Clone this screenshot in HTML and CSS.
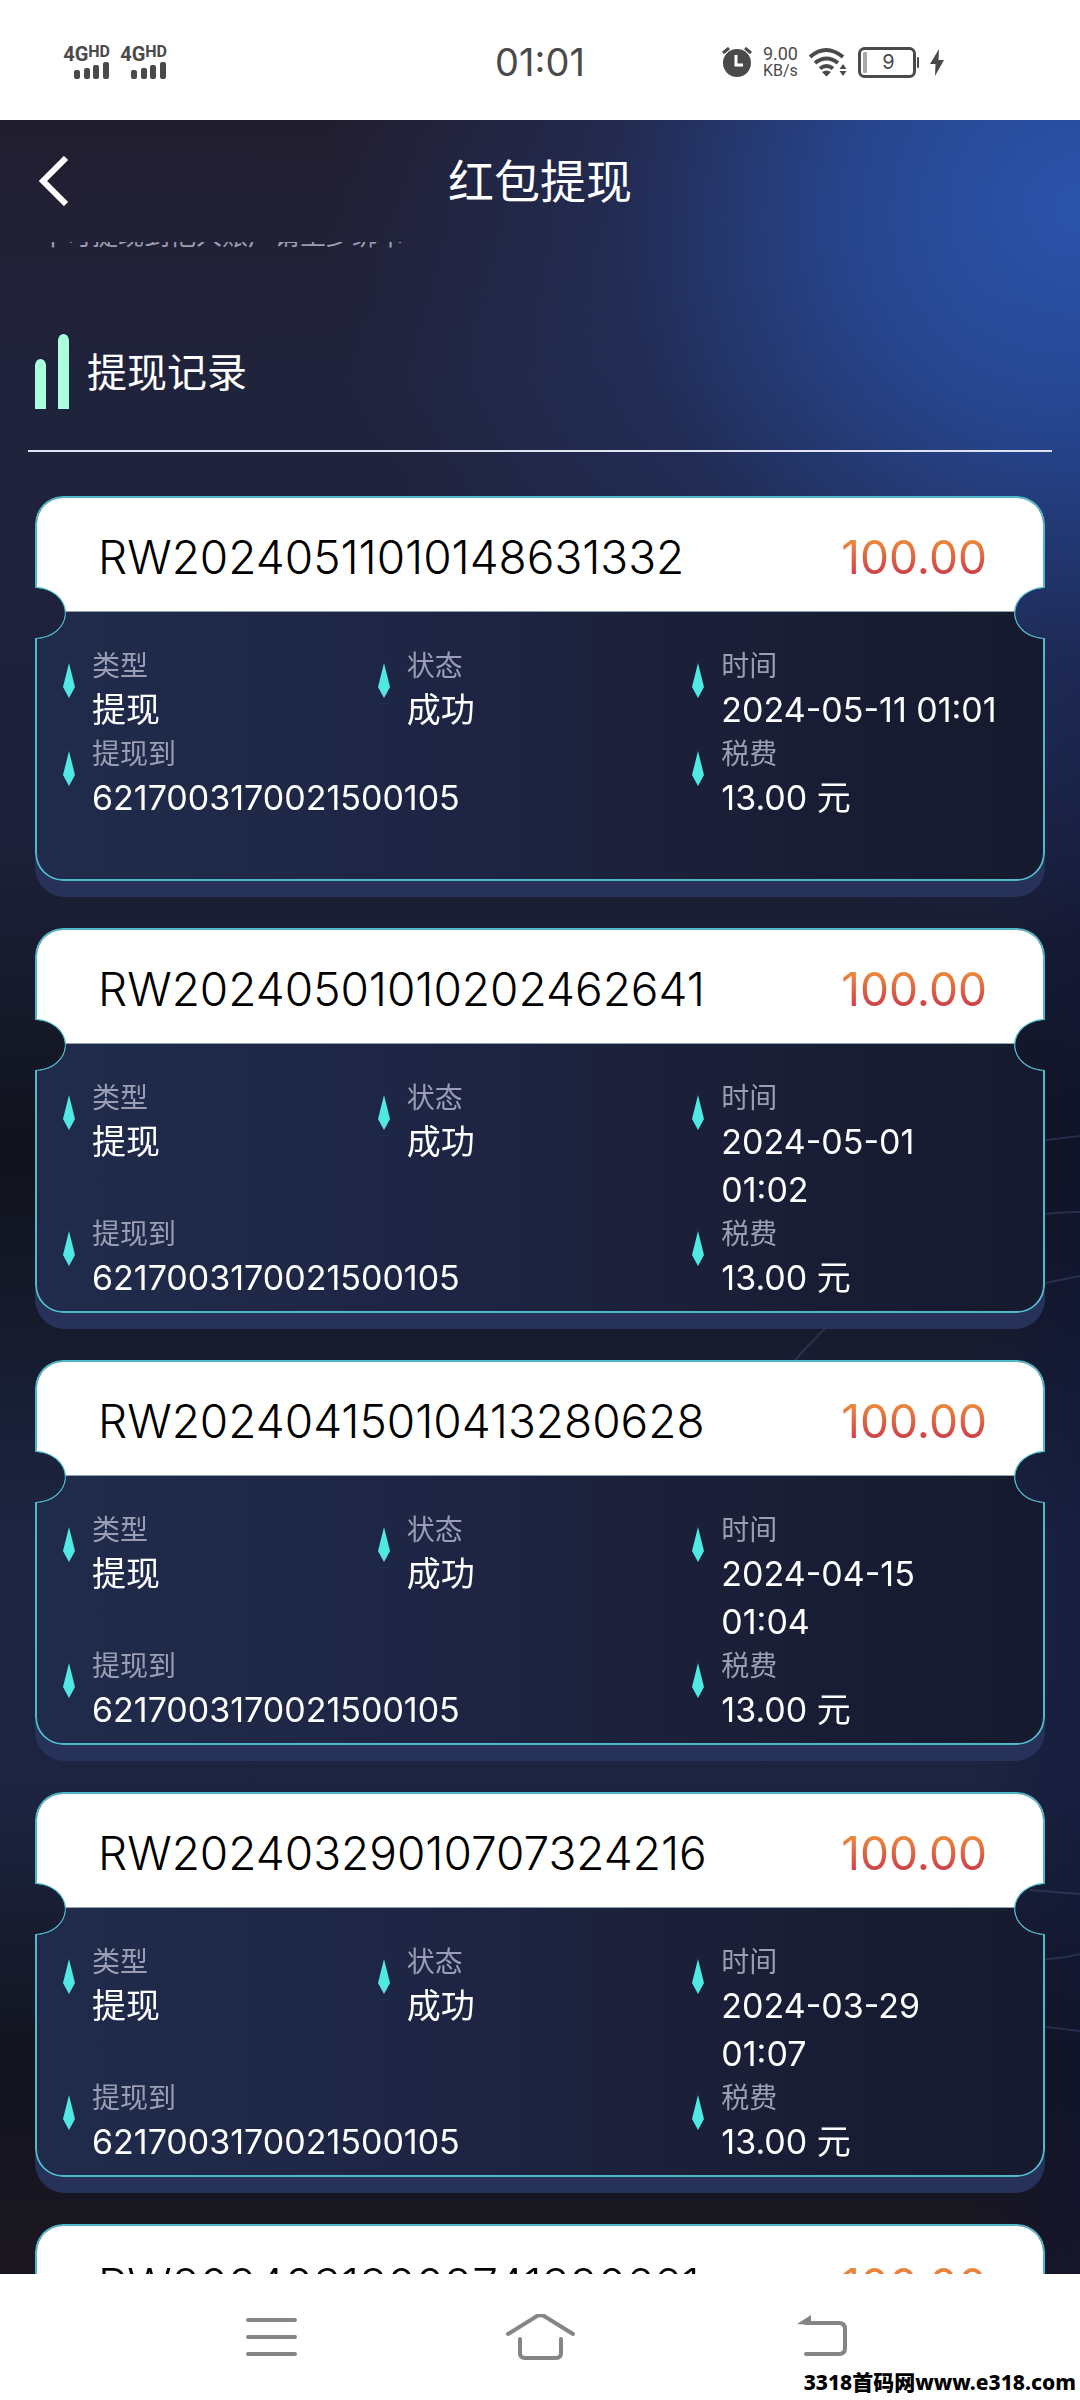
FILE: index.html
```html
<!DOCTYPE html>
<html lang="zh-CN">
<head>
    <meta charset="UTF-8">
    <meta name="viewport" content="width=device-width, initial-scale=1.0">
    <title>红包提现</title>
    <link rel="stylesheet" href="styles.css">
</head>
<body>

    <!-- Status Bar -->
    <div class="status-bar">
        <div class="status-left">
            <div class="signal">
                <span class="signal-label">4G<sup>HD</sup></span>
                <svg class="signal-bars" width="36" height="17" viewBox="0 0 36 17" fill="#4a4a4a"><rect x="0" y="8" width="6" height="9" rx="2"/><rect x="10" y="6" width="6" height="11" rx="2"/><rect x="19" y="3" width="6" height="14" rx="2"/><rect x="29" y="0" width="6" height="17" rx="2"/></svg>
            </div>
            <div class="signal">
                <span class="signal-label">4G<sup>HD</sup></span>
                <svg class="signal-bars" width="36" height="17" viewBox="0 0 36 17" fill="#4a4a4a"><rect x="0" y="8" width="6" height="9" rx="2"/><rect x="10" y="6" width="6" height="11" rx="2"/><rect x="19" y="3" width="6" height="14" rx="2"/><rect x="29" y="0" width="6" height="17" rx="2"/></svg>
            </div>
        </div>
        <div class="status-time">01:01</div>
        <div class="status-right">
            <svg width="30" height="30" viewBox="0 0 30 30"><circle cx="15" cy="16" r="14" fill="#4a4a4a"/><path d="M1 6L7 1M23 1l6 5" stroke="#4a4a4a" stroke-width="3" fill="none"/><path d="M14 8v10h7" stroke="#fff" stroke-width="3" fill="none"/></svg>
            <div class="net-speed"><span>9.00</span><span>KB/s</span></div>
            <svg width="38" height="30" viewBox="0 0 38 30"><g fill="none" stroke="#4a4a4a" stroke-width="4"><path d="M1 10Q17-4 34 10"/><path d="M6 16q11.500-9 23 0"/><path d="M11 21.500q6.500-5 13 0"/></g><path d="M13 25q4.500-3 9 0l-4.500 4.500zM34 17l3.500 5h-7zM34 29l3.500-5h-7z" fill="#4a4a4a"/></svg>
            <div class="battery">
                <svg width="61" height="31" viewBox="0 0 61 31"><rect x="1.500" y="1.500" width="55" height="28" rx="5" fill="none" stroke="#4a4a4a" stroke-width="3"/><rect x="5" y="5" width="4" height="21" rx="1" fill="#aaa"/><rect x="59" y="10" width="2" height="11" rx="1" fill="#4a4a4a"/></svg>
                <span>9</span>
            </div>
            <svg width="14" height="27" viewBox="0 0 14 27"><path d="M9 0L0 15h5.500L5 27l9-16H8.500z" fill="#4a4a4a"/></svg>
        </div>
    </div>

    <main class="app">
        <svg class="backdrop-lines" viewBox="0 0 1080 2154" preserveAspectRatio="none" aria-hidden="true">
            <g fill="none" stroke="#8a9ad8" stroke-opacity=".18" stroke-width="2">
                <path d="M1030 1022l50-6M1030 1096q25-4 50-4M1030 1166l50-10"/>
                <path d="M780 1260q50-70 130-110M1030 1770l50 4M1030 1840q25 0 50-6M1030 1905l50 6"/>
            </g>
        </svg>

        <header class="app-header">
            <button class="back-button" type="button" aria-label="返回">
                <svg width="32" height="50" viewBox="0 0 32 50"><path d="M29 2L6 25l23 23" fill="none" stroke="#fff" stroke-width="6"/></svg>
            </button>
            <h1>红包提现</h1>
        </header>

        <div class="scroll-area">
            <p class="notice">不可提现到他人账户请至少绑卡</p>

            <div class="section-title">
                <svg width="35" height="75" viewBox="0 0 35 75" fill="#aaffdc"><path d="M0 75V31q1-6 5.500-6t5.500 6v44zM23 75V6q1-6 5.500-6t5.500 6v69z"/></svg>
                <h2>提现记录</h2>
            </div>

            <ul class="ticket-list" id="ticketList"></ul>
        </div>
    </main>

    <!-- System Navigation -->
    <nav class="nav-bar">
        <button type="button" aria-label="菜单">
            <svg width="72" height="46" viewBox="0 0 72 46"><path d="M13 6h47M13 23h47M13 40h47" stroke="#858585" stroke-width="4" stroke-linecap="round"/></svg>
        </button>
        <button type="button" aria-label="主页">
            <svg width="72" height="46" viewBox="0 0 72 46"><path d="M4 20L33 2q4-1.500 7 0l29 18M16 25v14q0 5 5 5h31q5 0 5-5V25" fill="none" stroke="#858585" stroke-width="4" stroke-linecap="round"/></svg>
        </button>
        <button type="button" aria-label="后退">
            <svg width="82" height="46" viewBox="0 0 82 46"><path d="M38 9h33q6 0 6 6v19q0 6-6 6H38" fill="none" stroke="#858585" stroke-width="4" stroke-linecap="round"/><path d="M29 10L43 1v10z" fill="#858585"/></svg>
        </button>
        <span class="watermark">3318首码网www.e318.com</span>
    </nav>

    <script>
        const records = [
            { id: 'RW20240511010148631332', time: '2024-05-11 01:01' },
            { id: 'RW20240501010202462641', time: '2024-05-01 01:02' },
            { id: 'RW20240415010413280628', time: '2024-04-15 01:04' },
            { id: 'RW20240329010707324216', time: '2024-03-29 01:07' },
            { id: 'RW20240318002741320661', time: '2024-03-18 00:27' }
        ];

        const field = (label, value, extra = '') => `
            <div class="field ${extra}">
                <svg width="12" height="35" viewBox="0 0 12 35"><path d="M6 0l6 24-6 11-6-11z" fill="#4fe8e2"/></svg>
                <dl><dt>${label}</dt><dd>${value}</dd></dl>
            </div>`;

        document.getElementById('ticketList').innerHTML = records.map(record => `
            <li class="ticket-wrap">
                <article class="ticket">
                    <div class="ticket-head">
                        <span class="ticket-id">${record.id}</span>
                        <span class="amount">100.00</span>
                    </div>
                    <div class="ticket-body">
                        ${field('类型', '提现')}
                        ${field('状态', '成功')}
                        ${field('时间', record.time)}
                        ${field('提现到', '6217003170021500105', 'wide')}
                        ${field('税费', '13.00 元')}
                    </div>
                </article>
            </li>`).join('');
    </script>

</body>
</html>
```
FILE: styles.css
```css
/* --- Basic Setup --- */
:root {
    --status-color: #4a4a4a;
    --ticket-border: #4fb9c9;
    --label-color: #9a9db4;
    --strip-color: #26325a;
}

*,
*::before,
*::after {
    box-sizing: border-box;
}

body {
    margin: 0;
    height: 100vh;
    display: flex;
    flex-direction: column;
    overflow: hidden;
    background: #fff;
    font-family: Inter, "Noto Sans CJK SC", sans-serif;
}

h1, h2, p, ul, dl, dd {
    margin: 0;
    padding: 0;
    font-weight: 400;
}

button {
    padding: 0;
    border: none;
    background: none;
    cursor: pointer;
}

svg {
    display: block;
    flex: none;
}

/* --- Status Bar --- */
.status-bar {
    flex: none;
    height: 120px;
    padding: 4px 136px 0 62px;
    display: grid;
    grid-template-columns: 1fr auto 1fr;
    align-items: center;
    color: var(--status-color);
}

.status-left {
    display: flex;
    gap: 9px;
}

.signal {
    width: 48px;
    display: flex;
    flex-direction: column;
    align-items: flex-end;
}

.signal-label {
    display: flex;
    font: 700 20px/16px Roboto, sans-serif;
}

.signal-label sup {
    font-size: 16px;
    line-height: 12px;
}

.status-time {
    font-size: 38px;
    /* centre on the screen, the side paddings differ */
    margin-left: 74px;
}

.status-right {
    display: flex;
    align-items: center;
    justify-content: flex-end;
    gap: 11px;
}

.net-speed {
    display: flex;
    flex-direction: column;
    font: 18px/17px Roboto, sans-serif;
}

.net-speed span:last-child {
    font-size: 16px;
}

.battery {
    display: grid;
    place-items: center;
    font-size: 20px;
}

.battery > * {
    grid-area: 1 / 1;
}

/* --- App Screen --- */
.app {
    flex: 1;
    min-height: 0;
    position: relative;
    overflow: hidden;
    isolation: isolate;
    color: #fff;
    background:
        radial-gradient(ellipse 70% 34% at 100% 4%, #2b54ac 0%, rgba(40, 76, 158, 0.85) 30%, rgba(36, 56, 116, 0.45) 62%, transparent 100%),
        linear-gradient(90deg, transparent 90%, rgba(14, 20, 60, 0.4) 100%),
        linear-gradient(180deg, #221e30 0%, #20233c 12%, #1c2038 34%, #10131c 48%, #1d2542 66%, #1c2440 78%, #12141e 90%, #1b1721 100%);
}

.backdrop-lines {
    position: absolute;
    inset: 0;
    width: 100%;
    height: 100%;
    z-index: -2;
}

.app-header {
    height: 122px;
    padding: 0 37px;
    display: grid;
    grid-template-columns: 1fr auto 1fr;
    align-items: center;
}

h1 {
    font-size: 46px;
    line-height: 64px;
}

/* --- Section Title --- */
.scroll-area {
    padding: 0 28px;
}

.notice {
    height: 7px;
    padding-left: 12px;
    display: flex;
    align-items: flex-end;
    overflow: hidden;
    color: var(--label-color);
    font-size: 26px;
    line-height: 26px;
}

.section-title {
    height: 203px;
    padding: 0 7px 41px;
    display: flex;
    align-items: flex-end;
    gap: 17px;
    border-bottom: 2px solid #dfe2f0;
}

h2 {
    font-size: 40px;
    line-height: 72px;
}

/* --- Tickets --- */
.ticket-list {
    padding: 44px 7px 0;
    list-style: none;
    display: flex;
    flex-direction: column;
    gap: 31px;
}

.ticket-wrap {
    position: relative;
    padding-bottom: 16px;
}

.ticket-wrap::before {
    content: "";
    position: absolute;
    inset: auto 0 0;
    height: 60px;
    border-radius: 0 0 30px 30px;
    background: var(--strip-color);
    z-index: -1;
}

.ticket {
    position: relative;
    min-height: 385px;
    border: 2px solid var(--ticket-border);
    border-radius: 28px;
    overflow: hidden;
    background: linear-gradient(90deg, #202b4b, #1e2544 40%, #1b1f38 65%, #161a2e);
    /* cut the notches out of both sides */
    -webkit-mask:
        radial-gradient(ellipse 30px 25px at 0 117px, transparent 98%, #000 100%) left / 51% 100% no-repeat,
        radial-gradient(ellipse 30px 25px at 100% 117px, transparent 98%, #000 100%) right / 51% 100% no-repeat;
}

.ticket::before,
.ticket::after {
    content: "";
    position: absolute;
    top: 89px;
    width: 62px;
    height: 52px;
    border: 2px solid var(--ticket-border);
    border-radius: 50%;
}

.ticket::before {
    left: -33px;
}

.ticket::after {
    right: -33px;
}

.ticket-head {
    height: 114px;
    padding: 4px 56px 0 61px;
    display: flex;
    align-items: center;
    justify-content: space-between;
    background: #fff;
    border-bottom: 1px solid #8fa3b0;
    font-size: 46px;
    font-weight: 300;
    line-height: 58px;
}

.ticket-id {
    color: #000;
}

.amount {
    background: linear-gradient(180deg, #ec8a3c 20%, #cf3f4a 80%);
    -webkit-background-clip: text;
    background-clip: text;
    color: transparent;
    font-weight: 400;
}

.ticket-body {
    padding: 34px 36px 0 26px;
    display: grid;
    grid-template-columns: repeat(3, 1fr);
}

.field {
    display: flex;
    gap: 17px;
}

.field svg {
    margin-top: 17px;
}

.wide {
    grid-column: span 2;
}

dt {
    font-size: 28px;
    line-height: 40px;
    color: var(--label-color);
}

dd {
    font-size: 34px;
    line-height: 48px;
}

/* --- System Navigation --- */
.nav-bar {
    flex: none;
    position: relative;
    height: 126px;
    padding: 0 136px;
    display: grid;
    grid-template-columns: repeat(3, 1fr);
    place-items: center;
    background: #fff;
}

.watermark {
    position: absolute;
    right: 4px;
    bottom: 4px;
    font: 800 21px/28px "Noto Sans", "Noto Sans CJK SC", sans-serif;
    color: #000;
}
```
